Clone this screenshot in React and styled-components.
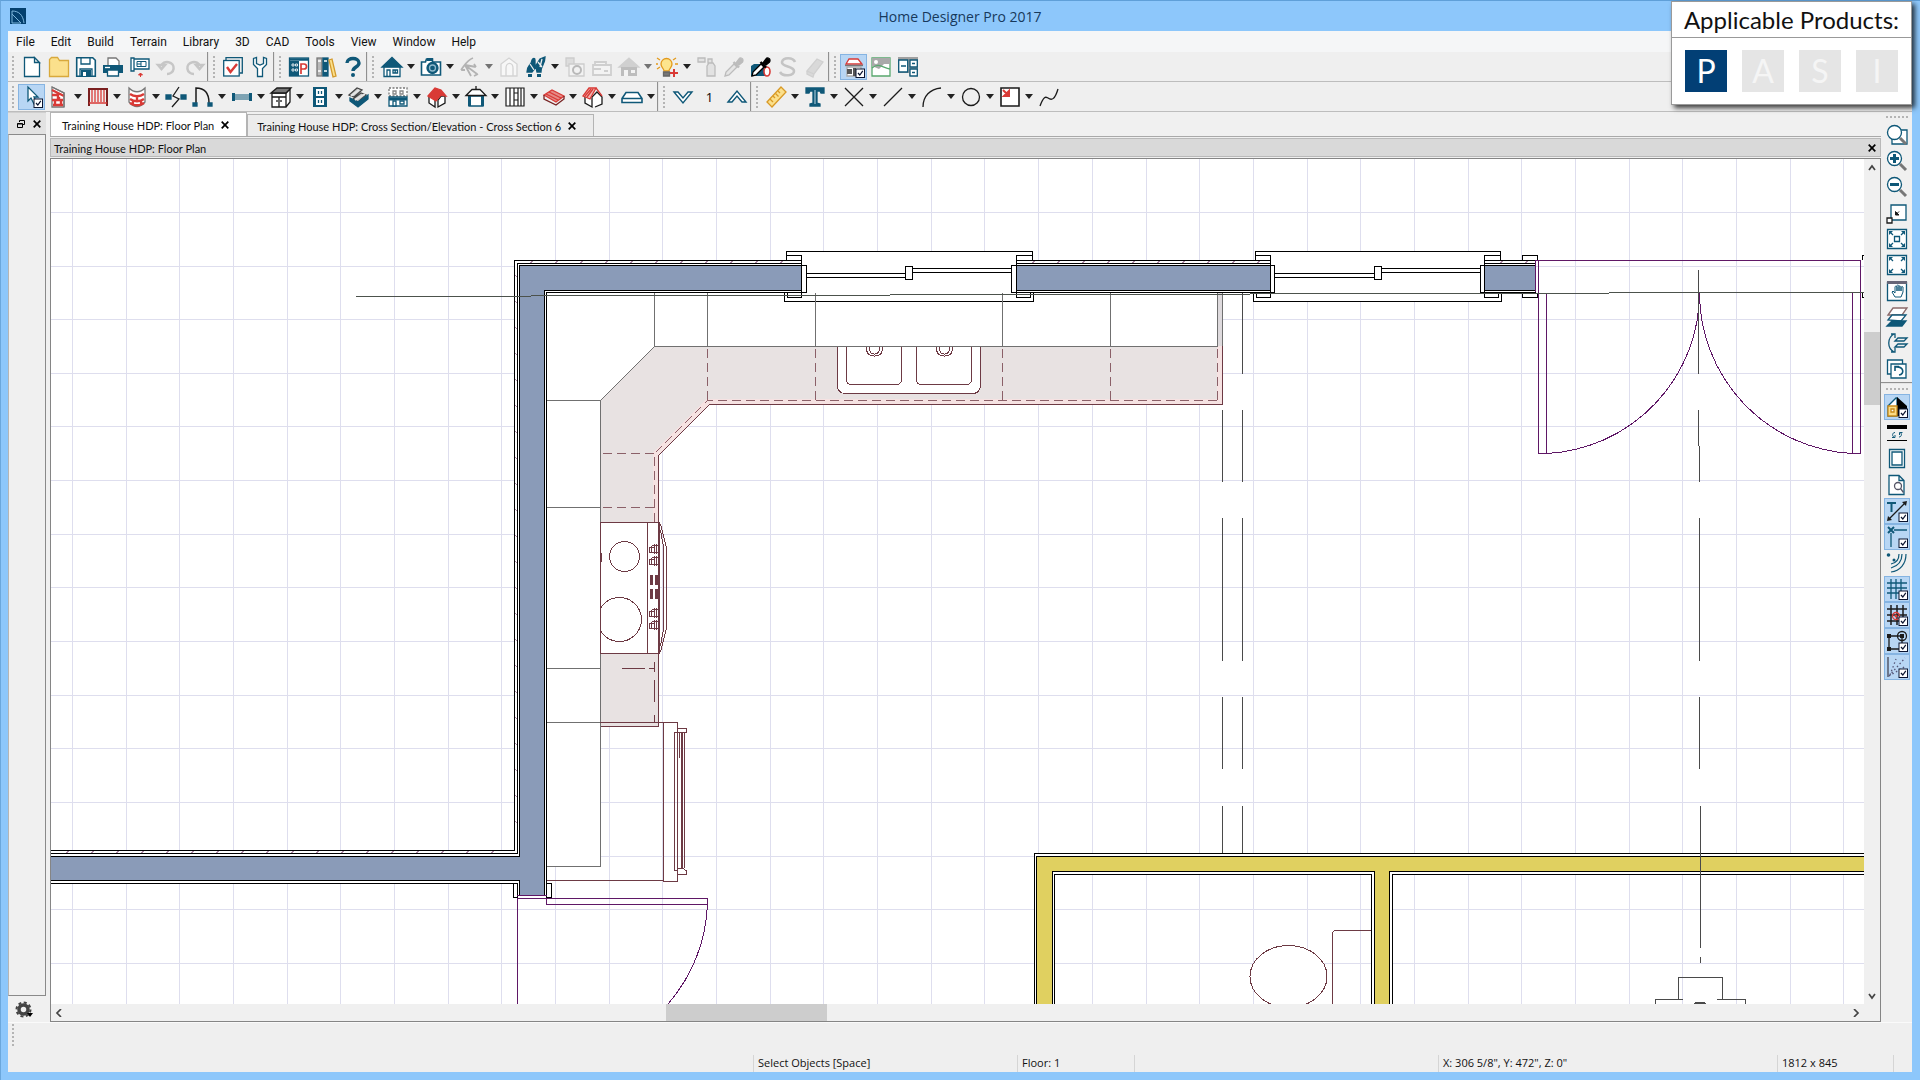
import React from "react";
import styled, { createGlobalStyle, css } from "styled-components";

const TEAL = "#0f5878";
const RED = "#d93a36";
const INK = "#1b1b1b";
const MAROON = "#6d3a44";
const PURPLE = "#5f1766";

const Global = createGlobalStyle`
  * { box-sizing: border-box; }
  body { margin: 0; background: #8dc7fb; }
  button {
    font: inherit;
    color: inherit;
    background: none;
    border: 0;
    padding: 0;
    margin: 0;
  }
`;

const AppWindow = styled.div`
  position: relative;
  display: flex;
  flex-direction: column;
  min-height: 100vh;
  padding: 0 8px 8px;
  background: #8dc7fb;
  border-top: 1px solid #5f9fd8;
  border-left: 1px solid #6ba7dc;
  padding-left: 7px;
  color: #111;
  font-family: "Noto Sans", "Open Sans", sans-serif;
  font-size: 12px;
`;

const TitleBar = styled.header`
  display: grid;
  grid-template-columns: 1fr auto 1fr;
  align-items: center;
  height: 30px;
  h1 {
    margin: 0;
    font-size: 14px;
    font-weight: 400;
    font-family: "Open Sans", sans-serif;
    color: #17395c;
  }
`;

const Logo = styled.svg`
  width: 16px;
  height: 16px;
  margin-left: 2px;
`;

const MenuBar = styled.nav`
  display: flex;
  align-items: center;
  height: 21px;
  background: #f5f6f7;
`;

const MenuItem = styled.button`
  padding: 0 8px;
  line-height: 20px;
  font-size: 12px;
  font-family: Roboto, sans-serif;
`;

const ToolRow = styled.div`
  display: flex;
  height: 30px;
  background: #efefef;
  border-bottom: 1px solid #bdbdbd;
`;

const Group = styled.div`
  display: flex;
  flex-direction: ${(p) => (p.$vertical ? "column" : "row")};
  align-items: center;
  ${(p) =>
    p.$vertical
      ? css`border-bottom: ${p.$last ? 0 : "2px groove #e4e4e4"};`
      : css`border-right: ${p.$last ? 0 : "2px groove #e4e4e4"};`}
`;

const Grip = styled.span`
  flex: none;
  background-image: radial-gradient(circle, #b4b4b4 1px, transparent 1px);
  ${(p) =>
    p.$vertical
      ? css`width: 24px; height: 4px; margin: 3px 0; background-size: 4px 4px;`
      : css`width: 4px; height: 24px; margin: 0 3px; background-size: 4px 4px;`}
`;

const ToolButton = styled.button`
  display: grid;
  place-items: center;
  width: 27px;
  height: 26px;
  border: 1px solid ${(p) => (p.$on ? "#86b4e2" : "transparent")};
  background: ${(p) => (p.$on ? "#b8d6f4" : "transparent")};
`;

const DropButton = styled.button`
  display: grid;
  place-items: center;
  width: 12px;
  height: 26px;
  opacity: ${(p) => (p.$dim ? 0.6 : 1)};
`;

const Glyph = styled.svg`
  width: 20px;
  height: 20px;
  overflow: visible;
  fill: none;
  stroke: ${TEAL};
  stroke-width: 1.3;
`;

const FloorNumber = styled.span`
  width: 27px;
  text-align: center;
  font-size: 13px;
`;

const Main = styled.div`
  flex: 1;
  display: flex;
  min-height: 0;
  background: #f0f0f0;
`;

const LeftDock = styled.aside`
  display: flex;
  flex-direction: column;
  width: 38px;
  border-top: 1px solid #cfcfcf;
`;

const DockHeader = styled.div`
  display: flex;
  justify-content: flex-end;
  align-items: center;
  gap: 4px;
  height: 21px;
  padding-right: 3px;
  background: #e2e2e2;
`;

const DockBody = styled.div`
  flex: 1;
  border: 1px solid #8a8a8a;
  border-left-color: #b5b5b5;
  background: #f0f0f0;
`;

const DockFooter = styled.div`
  height: 26px;
  padding: 5px 7px;
`;

const Center = styled.main`
  flex: 1;
  min-width: 0;
  display: flex;
  flex-direction: column;
  padding-left: 4px;
`;

const Tabs = styled.div`
  display: flex;
  align-items: flex-end;
  height: 25px;
  border-bottom: 1px solid #a9a9a9;
`;

const Tab = styled.div`
  display: flex;
  align-items: center;
  gap: 5px;
  height: ${(p) => (p.$active ? 24 : 22)}px;
  padding: 1px 15px 0 ${(p) => (p.$active ? 11 : 9)}px;
  background: ${(p) => (p.$active ? "#fff" : "#ececec")};
  border: 1px solid #b4b4b4;
  border-bottom: 0;
  font-family: Lato, sans-serif;
  font-size: 11px;
`;

const CloseButton = styled.button`
  display: grid;
  place-items: center;
  width: 12px;
  height: 14px;
`;

const DocTitle = styled.div`
  display: flex;
  justify-content: space-between;
  align-items: center;
  height: 19px;
  margin-top: 1px;
  padding: 1px 2px 0 3px;
  background: #d9d9d9;
  border: 1px solid #b9b9b9;
  font-family: Lato, sans-serif;
  font-size: 11px;
`;

const View = styled.div`
  flex: 1;
  display: grid;
  grid-template-columns: 1fr 16px;
  grid-template-rows: 1fr 17px;
  margin-top: 1px;
  border: 1px solid #858585;
  background: #f0f0f0;
`;

const Plan = styled.svg`
  width: 100%;
  height: 100%;
  min-height: 400px;
  background: #fff;
  shape-rendering: crispEdges;
`;

const ScrollTrack = styled.div`
  display: flex;
  flex-direction: ${(p) => (p.$vertical ? "column" : "row")};
  justify-content: space-between;
  align-items: stretch;
  background: #f0f0f0;
  button {
    display: grid;
    place-items: center;
    flex: none;
    width: 16px;
    height: 17px;
  }
`;

const Rail = styled.div`
  flex: 1;
  display: flex;
  flex-direction: inherit;
`;

const Space = styled.span`
  flex: ${(p) => p.$size};
`;

const Thumb = styled.span`
  flex: ${(p) => p.$size};
  background: #cdcdcd;
`;

const RightBar = styled.aside`
  width: 31px;
  background: #f0f0f0;
  ${ToolButton} { width: 26px; }
`;

const StatusBar = styled.footer`
  display: flex;
  flex-direction: column;
  justify-content: space-between;
  height: 50px;
  background: #efefef;
  border-top: 1px solid #fafafa;
`;

const StatusCells = styled.div`
  display: grid;
  grid-template-columns: 745fr 264fr 117fr 304fr 339fr 116fr 19fr;
  height: 17px;
  font-family: "Open Sans", sans-serif;
  font-size: 11px;
  line-height: 15px;
`;

const Cell = styled.span`
  padding-left: 4px;
  white-space: nowrap;
  border-left: 1px solid ${(p) => (p.$first ? "transparent" : "#d5d5d5")};
`;

const Products = styled.section`
  position: absolute;
  top: 0;
  right: 8px;
  width: 241px;
  height: 104px;
  background: #fff;
  border: 1px solid #9a9a9a;
  box-shadow: 3px 3px 5px rgba(0, 0, 0, 0.75);
  h2 {
    margin: 0;
    height: 36px;
    line-height: 36px;
    text-align: center;
    border-bottom: 1px solid #999;
    font-family: Lato, sans-serif;
    font-weight: 400;
    font-size: 24px;
    white-space: nowrap;
  }
`;

const Badges = styled.div`
  display: flex;
  justify-content: center;
  gap: 15px;
  padding-top: 12px;
`;

const Badge = styled.span`
  width: 42px;
  height: 42px;
  line-height: 42px;
  text-align: center;
  font-family: Lato, sans-serif;
  font-size: 32px;
  color: ${(p) => (p.$on ? "#fff" : "#f5f5f5")};
  background: ${(p) => (p.$on ? "#023f75" : "#e5e5e5")};
`;

const Check = () => (
  <g>
    <rect x="12" y="12" width="8.5" height="8.5" fill="#fff" stroke="#0a1430" strokeWidth="1" />
    <path d="M14 16l1.8 2 3-4.2" stroke="#0a1430" strokeWidth="1.2" />
  </g>
);

const Dropper = ({ c, f }) => (
  <g stroke={c}>
    <path d="M1 19l1-4 8-8 3 3-8 8z" fill={f} />
    <path d="M9.500 5l5.500 5.500" strokeWidth="2.400" />
    <path d="M12 6l3-4c1-2 4-1 4 1s0 2-4 5z" fill={c} />
  </g>
);

const Lens = ({ children }) => (
  <g>
    <path d="M13 13l6 6" stroke="#777" strokeWidth="3" />
    <circle cx="7.5" cy="7.5" r="7" fill="#fff" />
    {children}
  </g>
);

const icons = {
  new: <path d="M2.500 .5h10l5 5v14h-15zM12.500 .5v5h5z" fill="#fff" />,
  open: <path d="M.5 19.500v-17l2-2h6l2 3h9v16z" fill="#fbe08c" stroke="#d8a93c" />,
  save: (
    <g>
      <path d="M.7 .7h16l2.600 2.600v16h-18.600z" fill="#fff" strokeWidth="1.600" />
      <path d="M5 1v6h9v-6M4 19v-7h12v7" /><rect x="5" y="13" width="10" height="7" fill={TEAL} stroke="none" />
      <rect x="7" y="15" width="3" height="4" fill="#fff" stroke="none" />
    </g>
  ),
  print: (
    <g>
      <path d="M5 8V1h8l3 3v4" fill="#fff" stroke="#777" />
      <path d="M0 8h20v8h-20z" fill={TEAL} stroke="none" />
      <path d="M4.500 13h11v6h-11z" fill="#fff" /><path d="M2 10.500h5" stroke="#fff" />
    </g>
  ),
  sheet: (
    <g>
      <path d="M1 1h3v13h-3zM4 2h15v10h-15" fill="#fff" /><path d="M7 4.500h9v5h-9zM11 4.500v5M7 7h4" strokeWidth="1" />
      <path d="M10.500 20v-4M8.500 18l2-2 2 2z" fill={RED} stroke={RED} strokeWidth="1" />
    </g>
  ),
  undo: <path d="M4 9a6.500 6 0 1 1 6 8M1 8l3.500 4 3.500-4z" stroke="#c6c6c6" strokeWidth="2.500" fill="none" />,
  redo: <path d="M16 9a6.500 6 0 1 0-6 8M19 8l-3.500 4-3.500-4z" stroke="#c6c6c6" strokeWidth="2.500" fill="none" />,
  prefs: (
    <g>
      <path d="M3 3V.7h16.300v15.300h-2.500" /><rect x=".7" y="3.500" width="15.500" height="15.500" fill="#fff" />
      <path d="M4 10l3.500 5 6.500-8" stroke={RED} strokeWidth="2.400" />
    </g>
  ),
  wrench: <path d="M3.500 1.500v6l4 4v8h5v-8l4-4v-6l-3-1v6l-3.500 1.500-3.500-1.500v-6z" fill="#fff" />,
  catalog: (
    <g>
      <rect x=".5" y="1" width="19" height="18" fill="#fff" />
      <path d="M1 2.500h18" strokeWidth="2.500" />
      <rect x="1" y="4" width="9" height="15" fill={TEAL} stroke="none" />
      <path d="M3 7h2v2h-2zM6.500 7h2v2h-2zM3 12h2v2h-2zM6.500 12h2v2h-2z" stroke="#fff" strokeWidth=".8" />
      <path d="M12 17v-10h3a2.500 2.500 0 0 1 0 5h-3" stroke={RED} strokeWidth="1.700" />
    </g>
  ),
  books: (
    <g>
      <rect x="1" y="1" width="5" height="18" fill="#b8b8b8" stroke="#777" />
      <rect x="7" y="1" width="5" height="18" fill={TEAL} />
      <path d="M2 4h3M8 4h3M8 14h3M2 14h3" stroke="#fff" />
      <path d="M13 3l3-1 4 17-3 1z" fill="#fbe08c" stroke="#d39a2c" />
    </g>
  ),
  help: (
    <g>
      <path d="M4 6c0-6 12-6 12 0 0 4-6 4-6 8" strokeWidth="3.400" />
      <circle cx="10" cy="18" r="2" fill={TEAL} stroke="none" />
    </g>
  ),
  house: (
    <g>
      <path d="M2 9.500h16v10h-16z" fill="#fff" />
      <path d="M0 10l10-9.500 10 9.500z" fill={TEAL} />
      <path d="M5 19v-6h3v6M11 13h4.500v3h-4.500zM13.200 13v3" />
    </g>
  ),
  camera: (
    <g>
      <path d="M.5 5h4l1-3h6v3h8v13h-19z" fill="#fff" strokeWidth="1.600" />
      <rect x="6" y="1" width="6" height="3" fill={TEAL} stroke="none" />
      <circle cx="11.500" cy="11" r="5.500" fill={TEAL} /><circle cx="11.500" cy="11" r="3" stroke="#8fb9cc" />
    </g>
  ),
  orbit: <path d="M13 1c-6 2-8 7-12 12M5 8l12 9M5 8l11 2M5 8l6 11M1 13l4 0M14 19l4-2M16 10l-2-3" stroke="#b3b3b3" strokeWidth="1.800" />,
  ghostDoor: <path d="M2 19v-12l8-6 8 6v12zM7 19v-8a3 4 0 0 1 7 0v8z" stroke="#d3d3d3" fill="#f7f7f7" />,
  walk: (
    <g>
      <path d="M1 15c0-7 4-6 5-12 1-2 3-2 3 0v7l5-8 5-2c0 8-4 8-4 15h-4l-1-5-4 5z" fill={TEAL} />
      <path d="M4 7l4 6M16 2l-2 8M12 5l4 5" stroke="#efefef" />
      <path d="M2 17h4v3h-4zM11 17h4v3h-4z" fill={TEAL} stroke="none" />
    </g>
  ),
  ghostCam: (
    <g stroke="#cdcdcd">
      <path d="M1 1h8v8h-8z" fill="#ddd" /><path d="M4 7h15v12h-15z" fill="#f2f2f2" />
      <circle cx="12" cy="13" r="4" stroke="#b9b9b9" strokeWidth="2" />
    </g>
  ),
  ghostCase: <path d="M1 8h18v10h-18zM3 8V5h11v3M1 12h8M12 14h4" stroke="#cfcfcf" fill="#f3f3f3" strokeWidth="1.800" />,
  ghostHouse: (
    <g>
      <path d="M0 10l10-9 10 9z" fill="#d0d0d0" stroke="#d0d0d0" />
      <path d="M2 10h16v9h-16z" fill="#bdbdbd" stroke="none" /><path d="M5 19v-6h4v6zM12 13h4v3h-4z" fill="#f3f3f3" stroke="none" />
    </g>
  ),
  bulb: (
    <g stroke="#e39a1c">
      <path d="M6 14c0-3-3-3-3-7a5.500 5.500 0 0 1 11 0c0 4-3 4-3 7z" fill="#fde58d" />
      <path d="M-1 1l3 2M18 1l-3 2M-1 12l3-2M17 7h3M-2 7h2" />
      <path d="M5.500 15h6v4h-6z" fill="#777" stroke="#666" />
      <path d="M12 16h8M16 12v8" stroke={RED} strokeWidth="2" />
    </g>
  ),
  spray: <path d="M1 1h7v4h-7zM10 9l2-3h4l2 3v10h-8zM11 2h4v4h-4z" stroke="#bcbcbc" fill="#e2e2e2" />,
  dropGhost: <Dropper c="#bcbcbc" f="#e5e5e5" />,
  dropper: (
    <g>
      <path d="M0 9l3-2h10l2 2v10h-15z" fill={TEAL} stroke="none" />
      <ellipse cx="16" cy="14.500" rx="3" ry="4.500" stroke={RED} strokeWidth="1.600" fill="#fff" />
      <Dropper c="#000" f="#fff" />
    </g>
  ),
  sGhost: <path d="M17 5c-2-5-12-5-13 0s12 4 12 9-11 6-14 1" stroke="#c4c4c4" strokeWidth="2.600" />,
  eraser: <path d="M2 14l10-12 6 3-9 12zM2 14v3l6 3 1-3" stroke="#d0d0d0" fill="#d9d9d9" />,
  camView: (
    <g>
      <path d="M2 7l3-5h9l4 5z" stroke={RED} fill="#fff" />
      <path d="M1 8.500h18" stroke="#777" /><path d="M3 10h14v9h-14z" fill="#fff" stroke="#aaa" />
      <path d="M3 12h5v5h-5zM9 11h3v8h-3z" fill="#555" stroke="none" /><Check />
    </g>
  ),
  backdrop: (
    <g>
      <path d="M1 1h18v18h-18z" fill="#fff" stroke="#58a86e" /><path d="M1 1h18v6l-6 0-5 5-7-3z" fill="#a9a9a9" stroke="none" />
      <path d="M1 11c7-6 11 0 18 1" stroke="#58a86e" /><circle cx="5" cy="5" r="2" fill="#fff" stroke="none" />
    </g>
  ),
  layout: (
    <g>
      <path d="M0 0h20v19h-9v-3h-11z" fill="#a0a0a0" stroke="none" />
      <path d="M.7 3h9v12h-9zM12 3h7.300v7h-7.300zM12 12h7.300v7h-7.300z" fill="#fff" />
      <path d="M3 9h5M14 6.500h3M14 15.500h3" />
    </g>
  ),
  select: (
    <g>
      <path d="M6 0v14l3-3 3 6 3-1-3-6h4z" fill="#fff" /><Check />
    </g>
  ),
  wall: (
    <g stroke={RED}>
      <path d="M3 0l12 6v14h-12z" fill="#fff" stroke="#777" />
      <path d="M3 3l12 6M3 8h6v5M3 13h11M6 13v5M10 10v3M4 18h10M12 14v4" strokeWidth="2.400" />
      <path d="M3 0l12 6v14" stroke="#777" />
    </g>
  ),
  railing: (
    <g stroke="#a33">
      <path d="M0 2h20M1 1v18M19 1v18" stroke="#7a1f1f" strokeWidth="2" />
      <path d="M4 3v12M7 3v12M10 3v12M13 3v12M16 3v12M1 16h18" stroke={RED} />
    </g>
  ),
  curved: (
    <g>
      <path d="M2 1c5 5 11 5 16 0v14c-5 6-11 6-16 0z" fill="#fff" stroke="#777" />
      <path d="M3 7c4 3 10 3 14 0M3 12c4 3 10 3 14 0M3 16c4 3 10 3 14 0M10 9v4M6 13v4M14 13v4" stroke={RED} strokeWidth="2.300" />
    </g>
  ),
  breakWall: (
    <g>
      <path d="M0 8h5v4h-5zM15 8h5v4h-5z" fill={TEAL} /><path d="M13 0l-6 9 6 3-7 8" stroke={INK} />
    </g>
  ),
  door: (
    <g>
      <path d="M3 16V1c9 0 13 6 13 15" stroke={INK} strokeWidth="1.500" />
      <path d="M0 16h4v3h-4zM15 16h4v3h-4z" fill={TEAL} />
    </g>
  ),
  window: (
    <g>
      <path d="M0 6h3v8h-3zM17 6h3v8h-3z" fill={TEAL} stroke="none" /><path d="M3 8h14M3 10h14M3 12h14" strokeWidth="1" />
    </g>
  ),
  cabinet: (
    <g stroke={INK}>
      <path d="M1 6h14v14h-14zM15 6l4-4v13l-4 5" fill="#fff" /><path d="M0 6l6-5h14l-5 5z" fill="#777" />
      <path d="M1 10h14M8 10v10M6 13v2M10 13v2" />
    </g>
  ),
  outlet: (
    <g>
      <rect x="3" y="0" width="14" height="20" fill={TEAL} stroke="none" />
      <path d="M6 2h8v7h-8zM6 11h8v7h-8z" fill="#fff" stroke="none" /><path d="M8.500 4v3M11.500 4v3M8.500 13v3M11.500 13v3" />
    </g>
  ),
  stairs: (
    <g stroke="#444">
      <path d="M0 8l8-7 5 2-8 7zM4 12l8-6 5 2-8 7z" fill="#c9c9c9" />
      <path d="M9 15l10-7v4l-10 8-8-6v-3z" fill={TEAL} stroke={TEAL} />
      <path d="M2 9l8-6M6 13l10-6" stroke="#e5e5e5" strokeWidth="2" />
    </g>
  ),
  floors: (
    <g>
      <path d="M1 1h18v8h-18z" stroke="#777" strokeDasharray="2 1.500" fill="#fff" /><path d="M5 4h3v3h-3zM12 4h3v3h-3z" stroke="#888" />
      <path d="M1 10h18v9h-18z" fill="#fff" /><path d="M1 12h18" strokeWidth="3" /><path d="M5 14h3v5h-3zM12 14h4v3h-4z" fill="#fff" />
    </g>
  ),
  roof: (
    <g>
      <path d="M2 9v7l6 4v-9M18 9v7l-7 4v-7l3-4 4 0" fill="#fff" stroke={INK} />
      <path d="M1 9l7-8 6 2 5 6-5-1-5 6z" fill={RED} stroke={RED} />
    </g>
  ),
  gable: (
    <g>
      <path d="M3 9h14v10h-14z" fill="#fff" /><path d="M3.500 9v10M16.500 9v10" strokeWidth="3" />
      <path d="M0 8.500l6-6h8l6 6z" fill="#fff" stroke={INK} /><path d="M10-1v3" stroke={INK} />
    </g>
  ),
  framing: <path d="M1 1h18v18h-18zM5 1v18M9 1v18M13 1v18M9 6h4M9 13h4M16 1v18" stroke={INK} fill="#fff" strokeWidth="1.200" />,
  deck: (
    <g stroke={RED}>
      <path d="M0 8l8-5 12 6-8 6z" fill="#e58a86" /><path d="M2 7l12 6M5 5l12 6" />
      <path d="M0 8v4l12 6 8-6v-3" stroke="#722" />
    </g>
  ),
  dormer: (
    <g>
      <path d="M2 8v8l7 4v-10M9 20v-10l5-5 5 5v7l-7 3" fill="#fff" stroke={INK} />
      <path d="M0 9l6-8h7l-6 11zM13 1l6 8" fill="#f2b5b1" stroke={RED} /><path d="M2 9l6-7M4 10l6-8" stroke={RED} />
    </g>
  ),
  terrain: <path d="M0 15.500v-4l4-6h12l4 6v4zM0 11.500h20" fill="#fff" strokeWidth="1.600" />,
  down: <path d="M1 5l9 11 9-11h-4l-5 6-5-6z" fill="#fff" strokeWidth="1.400" />,
  up: <path d="M1 15l9-11 9 11h-4l-5-6-5 6z" fill="#fff" strokeWidth="1.400" />,
  ruler: (
    <g stroke="#d99a26">
      <path d="M1 15l14-15 5 5-14 15z" fill="#fbe08c" /><path d="M4 12l3 3M7 9l2 2M9.500 6.500l3 3M12 4l2 2" />
    </g>
  ),
  text: (
    <g>
      <path d="M1 1h18v5h-3l-1-2h-3v12l3 1v2h-10v-2l3-1v-12h-3l-1 2h-3z" fill={TEAL} />
      <path d="M10 3v14" stroke="#9fc1d0" strokeWidth="1.200" />
    </g>
  ),
  cross: <path d="M1 1l18 18M19 1L1 19" stroke={INK} />,
  line: <path d="M1 19L19 1" stroke={INK} />,
  arc: <path d="M1 20C1 9 8 2 19 1" stroke={INK} />,
  circle: <circle cx="10" cy="10" r="8.500" stroke={INK} />,
  box: (
    <g>
      <path d="M1 1h18v18h-18z" fill="#fff" stroke={INK} strokeWidth="1.600" />
      <path d="M3 3l5 5M9 4v5h-5z" stroke={RED} fill={RED} strokeWidth="2" />
    </g>
  ),
  spline: <path d="M1 19c4-11 6-9 8-8 4 3 7 1 10-9" stroke={INK} />,
  zoomBox: (
    <g>
      <path d="M5 5h15v14h-15z" fill="#fff" />
      <Lens />
    </g>
  ),
  zoomIn: <Lens><path d="M3 7.500h9M7.500 3v9" strokeWidth="3" /></Lens>,
  zoomOut: <Lens><path d="M3 7.500h9" strokeWidth="3" /></Lens>,
  undoZoom: (
    <g>
      <path d="M4 2h15v15h-15z" fill="#fff" /><path d="M0 15h5v5h-5z" fill="#fff" stroke={INK} />
      <path d="M12 8.500l-2 2M8.500 8.500v3.500h3.500z" stroke={INK} fill={INK} strokeWidth="1" />
    </g>
  ),
  fill: (
    <g>
      <path d="M.5 .5h19v19h-19z" fill="#fff" />
      <path d="M7.500 7.500h5v5h-5z" /><path d="M3 3l3 3M17 3l-3 3M3 17l3-3M17 17l-3-3" />
      <path d="M2 2h4l-4 4zM18 2h-4l4 4zM2 18h4l-4-4zM18 18h-4l4-4z" fill={TEAL} stroke="none" />
    </g>
  ),
  fillAll: (
    <g>
      <path d="M.5 .5h19v19h-19z" fill="#fff" /><path d="M3 3l3 3M17 3l-3 3M3 17l3-3M17 17l-3-3" />
      <path d="M2 2h4l-4 4zM18 2h-4l4 4zM2 18h4l-4-4zM18 18h-4l4-4z" fill={TEAL} stroke="none" />
    </g>
  ),
  pan: (
    <g>
      <path d="M.5 1.500h19v18h-19z" fill="#fff" /><path d="M0 1.500h20" stroke="#667" strokeWidth="3" />
      <path d="M5 11l3 5h6l2-5v-5c-1-1-2 0-2 1v3-4c-1-2-2-1-2 0v4-5c-1-2-2-1-2 0v5-4c-1-1-2-1-2 0v6l-2-2z" fill="#fff" strokeWidth="1" />
    </g>
  ),
  layers: (
    <g>
      <path d="M1 8l5-7h14l-5 7z" fill="#fff" stroke="#8a6a6a" /><path d="M1 13l4-5h14l-5 6z" fill="#fff" />
      <path d="M0 19l5-5h14l-4 5z" fill={TEAL} />
    </g>
  ),
  swapLayers: <path d="M7 1C0 5 0 15 7 19M4 1h4v4M4 19h4v-4M8 8l3-3h9l-3 3zM8 14l3-3h9l-3 3z" />,
  refresh: (
    <g>
      <path d="M.5 1h15v14h-15z" fill="#fff" /><path d="M4 5h15v14h-15z" fill="#fff" />
      <path d="M8 8c9-1 10 7 4 8M8 12v-4.500h4" strokeWidth="1.600" />
    </g>
  ),
  render: (
    <g>
      <path d="M1 9l8-8 1 0v18h-9z" fill="#fff" /><path d="M10 0l10 9v10h-10z" fill="#000" stroke="none" />
      <path d="M1 9h9v10h-9z" fill="#fbdc86" stroke="#c98a1a" /><path d="M4 12h3v3h-3z" fill="#fff" stroke="#c98a1a" /><Check />
    </g>
  ),
  lineWeight: (
    <g>
      <path d="M0 4h20" stroke="#000" strokeWidth="4" /><path d="M0 17.500h20" stroke="#000" strokeWidth="1" />
      <path d="M8 9.500c-3 0-3 4-1 4.500M5 14.500h3v-2.500M12 14c3 0 3-4 1-4.500M15.500 9.500h-3v2.500" strokeWidth="1" />
    </g>
  ),
  page: <path d="M2.500 .5h15v18h-15zM5 3h10v13h-10z" fill="#fff" />,
  preview: (
    <g>
      <path d="M2 .5h10l5 5v14h-15zM12 .5v5h5" fill="#fff" />
      <circle cx="11" cy="11" r="3.500" stroke="#556" /><path d="M13.500 13.500l3 4" stroke="#556" />
    </g>
  ),
  textArrow: (
    <g>
      <path d="M0 2h9M4.500 2v9" strokeWidth="2" /><path d="M2 18L18 2" stroke={INK} />
      <path d="M20 0l-5 1 4 4zM0 20l1-5 4 4z" fill={INK} stroke="none" /><Check />
    </g>
  ),
  snap: (
    <g>
      <path d="M7 3h13M4 6v14" /><path d="M1 0l6 6M7 0l-6 6" strokeWidth="2" /><Check />
    </g>
  ),
  arcs: (
    <g>
      <path d="M12 1c0 5-3 9-8 10M19 1c0 10-6 17-15 18M15 1c0 7-4 12-11 14" strokeWidth="1.200" />
      <circle cx="1.500" cy="2" r="1.800" fill={TEAL} stroke="none" /><circle cx="7" cy="7" r="1.500" fill={TEAL} stroke="none" />
    </g>
  ),
  grid: (
    <g>
      <path d="M0 4h20M0 9h20M0 14h20M4 0v20M9 0v20M14 0v20" /><Check />
    </g>
  ),
  gridSnap: (
    <g>
      <path d="M0 4h20M0 10h20M0 16h20M4 0v20M10 0v20M16 0v20" stroke={INK} strokeWidth="1.500" />
      <circle cx="9" cy="11" r="3.500" stroke={RED} /><circle cx="9" cy="11" r="1.500" fill={RED} stroke="none" /><Check />
    </g>
  ),
  objSnap: (
    <g stroke={INK}>
      <path d="M2 5h13v13h-13z" /><circle cx="15" cy="5" r="4.500" />
      <path d="M0 3h4v4h-4zM13 3h4v4h-4zM0 16h4v4h-4z" fill={INK} stroke="none" /><Check />
    </g>
  ),
  angleSnap: (
    <g>
      <path d="M1 0v20" stroke="#445" /><path d="M2 19L18 1M2 19L19 9M3 18L9 2" stroke="#557" strokeDasharray="1.500 2.500" /><Check />
    </g>
  ),
};

const Tool = ({ name, label, on, drop, dim }) => (
  <>
    <ToolButton type="button" aria-label={label || name} aria-pressed={on ? true : undefined} $on={on}>
      <Glyph viewBox="0 0 20 20" aria-hidden="true">{icons[name]}</Glyph>
    </ToolButton>
    {drop && (
      <DropButton type="button" aria-label={`${label || name} options`} $dim={dim}>
        <svg width="8" height="5"><path d="M0 0h8l-4 5z" fill="#222" /></svg>
      </DropButton>
    )}
  </>
);

const Cross = ({ size = 8 }) => (
  <svg width={size} height={size} viewBox="0 0 8 8" aria-hidden="true">
    <path d="M.7 .7l6.600 6.600M7.300 .7L.7 7.300" stroke="#000" strokeWidth="1.700" />
  </svg>
);

const Chevron = ({ d }) => (
  <svg width="8" height="8" viewBox="0 0 8 8" aria-hidden="true"><path d={d} fill="none" stroke="#444" strokeWidth="1.700" /></svg>
);

const menus = ["File", "Edit", "Build", "Terrain", "Library", "3D", "CAD", "Tools", "View", "Window", "Help"];

const topGroups = [
  ["new", "open", "save", "print", "sheet", "undo", "redo"],
  ["prefs", "wrench"],
  ["catalog", "books", "help"],
  ["house+", "camera+", "orbit-", "ghostDoor", "walk+", "ghostCam", "ghostCase", "ghostHouse-", "bulb+", "spray", "dropGhost", "dropper", "sGhost", "eraser"],
  ["camView*", "backdrop", "layout"],
];
const buildGroups = [
  ["select*", "wall+", "railing+", "curved+", "breakWall", "door+", "window+", "cabinet+", "outlet+", "stairs+", "floors+", "roof+", "gable+", "framing+", "deck+", "dormer+", "terrain+"],
  ["down", "#", "up"],
  ["ruler+", "text+", "cross+", "line+", "arc+", "circle+", "box+", "spline"],
];
const sideGroups = [
  ["zoomBox", "zoomIn", "zoomOut", "undoZoom", "fill", "fillAll", "pan", "layers", "swapLayers", "refresh"],
  ["render*", "lineWeight", "page", "preview", "textArrow*", "snap*", "arcs", "grid*", "gridSnap*", "objSnap*", "angleSnap*"],
];

const Groups = ({ groups, vertical }) =>
  groups.map((group, i) => (
    <Group key={i} $vertical={vertical} $last={i === groups.length - 1}>
      <Grip $vertical={vertical} />
      {group.map((entry) => {
        if (entry === "#") return <FloorNumber key={entry}>1</FloorNumber>;
        const name = entry.replace(/[+*-]$/, "");
        return (
          <Tool
            key={name}
            name={name}
            on={entry.endsWith("*")}
            drop={/[+-]$/.test(entry)}
            dim={entry.endsWith("-")}
          />
        );
      })}
    </Group>
  ));

const range = (n) => Array.from({ length: n }, (_, i) => i);

const GridLines = () => (
  <g stroke="#dedeee">
    {range(60).map((i) => {
      const x = Math.floor(72.4 + i * 53.68) + 0.5;
      return <path key={`v${i}`} d={`M${x} 0V2400`} />;
    })}
    {range(40).map((i) => {
      const y = Math.floor(212.4 + i * 53.64) + 0.5;
      return <path key={`h${i}`} d={`M0 ${y}H4000`} />;
    })}
  </g>
);

const WindowUnit = ({ x, end, jamb, mid }) => (
  <g stroke="#000" fill="none">
    <path d={`M${x - 15} 252H${end + 16}V260H${x - 15}zM${x + 1} 256H${end}V301H${x + 1}zM${x - 16} 294H${end + 17}V301H${x - 16}z`} fill="#fff" stroke="none" />
    <path d={`M${x - 15}.5 260V251.500H${end + 16}.5V260M${x - 15} 255.500H${x}.5V297.500H${x - 14}.5V293`} />
    <path d={`M${end + 16} 255.500H${end}.5V297.500H${end + 14}.5V293`} />
    <path d={`M${x - 17}.5 293V301.500H${end + 17}.5V293`} />
    <path d={`M${x}.5 265.500H${x + jamb}.5V292.500H${x}.5zM${end - jamb}.5 265.500H${end}.5V292.500H${end - jamb}.5z`} />
    <path d={`M${x + jamb} 273.500H${mid}M${x + jamb} 277.500H${mid}M${mid + 7} 268.500H${end - jamb}M${mid + 7} 272.500H${end - jamb}`} />
    <path d={`M${mid}.5 266.500h7v13h-7z`} fill="#fff" />
  </g>
);

const TopWall = ({ from, to }) => (
  <g>
    <path d={`M${from} 260H${to}V293H${from}z`} fill="#fff" />
    <path d={`M${from} 266H${to}V290H${from}z`} fill="#8a9bb8" />
    <path d={`M${from} 260.500H${to}M${from} 263.500H${to}M${from} 265.500H${to}M${from} 290.500H${to}M${from} 292.500H${to}`} stroke="#000" />
    {range(Math.floor((to - from) / 25)).map((i) => (
      <path key={i} d={`M${from + 16 + i * 25} 263l3-2`} stroke="#b08aa8" />
    ))}
  </g>
);

const Knobs = ({ y }) => (
  <g>
    {[0, 12].map((d) => (
      <g key={d}>
        <circle cx="652" cy={y + d + 6} r="3" /><circle cx="655" cy={y + d + 5} r="4" />
        <path d={`M654.500 ${y + d}v10M656.500 ${y + d}v10`} />
      </g>
    ))}
  </g>
);

const FloorPlan = () => (
  <Plan role="img" aria-label="Kitchen floor plan">
    <g transform="translate(-51 -159)" fill="none" strokeWidth="1">
      <GridLines />

      <path d="M547 293H1223V347H655L601 401V867H547z" fill="#fff" />
      <path d="M51 851H515V261H801V293H547V895H519V884H51z" fill="#fff" />
      <path d="M51 857H520V266H801V290H544V895H520V880H51z" fill="#8a9bb8" />
      <g stroke="#000">
        <path d="M51 850.500H514.500V260.500H801M51 853.500H517.500V263.500H801M51 856.500H519.500V265.500H801" />
        <path d="M801 290.500H544.500V895M801 292.500H546.500V898M51 880.500H519.500V895M51 883.500H517.500" />
        <path d="M513.500 883.500h4v14h-4zM546.500 883.500h5v14h-5z" fill="#fff" />
      </g>
      <g stroke="#b08aa8">
        {range(11).map((i) => <path key={`t${i}`} d={`M${530 + i * 25} 263l3-2`} />)}
        {range(22).map((i) => <path key={`s${i}`} d={`M515 ${275 + i * 26}l2 2`} />)}
        {range(18).map((i) => <path key={`b${i}`} d={`M${66 + i * 25} 853l3-2`} />)}
      </g>

      <TopWall from={1016} to={1271} />
      <TopWall from={1484} to={1536} />
      <WindowUnit x={801} end={1016} jamb={5} mid={905} />
      <WindowUnit x={1270} end={1484} jamb={4} mid={1374} />
      <path d="M1522.500 260V255.500H1537.500V260M1522.500 293V297.500H1537.500V293M1864 255.500H1862.500V260M1864 297.500H1862.500V293" stroke="#000" />

      <path d="M655 346H1222V404H710L659 455V522H601V400z" fill="#f6e2e2" />
      <path d="M655 346H1217V399H706L653 452V522H601V400zM601 654H658V727H601z" fill="#e8e2e2" />
      <path d="M1218 293H1222V346H1218z" fill="#dedadd" />
      <g stroke="#707070">
        <path d="M654.500 293V346.500H1217.500V293M707.500 293V346M815.500 293V346M1002.500 293V346M1110.500 293V346M1222.500 293V346" />
        <path d="M654.500 346.500L600.500 400.500V866.500H547M547 400.500H600M547 507.500H600M547 668.500H600M547 722.500H600" />
      </g>
      <path
        d="M1217 400.500H707.500L654.500 453.500V522M707.500 400V346M815.500 400V346M1002.500 400V346M1110.500 400V346M1217.500 400V346M654 453.500H601M654 507.500H601"
        stroke="#8b6068"
        strokeDasharray="9 5"
      />
      <g stroke={MAROON}>
        <path d="M1222.500 346V404.500H709.500L658.500 455.500V522M658.500 653V726.500H600.500" />
        <path d="M622 668.500H645M649 668.500H654M654.500 662V672M654.500 680V702M654.500 715V722M600 722.500H677.500" />
        <path d="M837.500 347V385Q837.500 393.500 846 393.500H972Q980.500 393.500 980.500 385V347" fill="#fff" />
        <path d="M846.500 347V379Q846.500 384.500 852 384.500H896Q901.500 384.500 901.500 379V347M916.500 347V379Q916.500 384.500 922 384.500H966Q971.500 384.500 971.500 379V347" />
        {[874, 944].map((x) => (
          <path key={x} d={`M${x - 8}.5 347v3q1 6 8 6t8-6v-3M${x - 5}.5 347v3q1 4 5 4t5-4v-3`} />
        ))}

        <path d="M600.500 522.500H659.500V653.500H600.500z" fill="#fff" />
        <path d="M647.500 522V653M658.500 522V653M601.500 553V562" />
        <circle cx="624.500" cy="556.500" r="15" />
        <path d="M601 607.500A22 22 0 1 1 601 631.500" />
        <path d="M660.500 524L666.500 548V628L660.500 652M660.500 530L663.500 547V629L660.500 646" />
        <Knobs y={544} />
        <Knobs y={608} />
        <path d="M651.500 575v10M656.500 575v10M651.500 589v10M656.500 589v10" strokeWidth="3" />

        <path d="M663.500 722V881.500H677.500V722M547 880.500H663" />
        <path d="M674.500 870.500V732.500H677M674 870.500H677M677.500 728.500H686.500V732.500H677.500zM679.500 732V758M684.500 732V868M677 868.500H683L686.500 871V874.500H677" />
        <path d="M681.500 732V868" strokeWidth="2" />
      </g>

      <g stroke={PURPLE}>
        <path d="M1535.500 292V260.500H1860.500V453.500H1852.500V293M1538.500 260V453.500H1546.500V293" />
        <path d="M1546.500 453.500A161 161 0 0 0 1699.500 292.500A161 161 0 0 0 1852.500 453.500" />
        <path d="M517 895.500H547M707.500 904V898.500H517.500V1010M546.500 898V904.500H707.500M707.500 904A161 161 0 0 1 668 1004" />
      </g>

      <path d="M356 296.500L1864 292.300" stroke="#4c524c" />
      <g stroke="#4a4a4a">
        <path d="M1242.500 293V374M1242.500 410V482M1242.500 518V661M1242.500 697V769M1242.500 806V853M1222.500 410V482M1222.500 518V661M1222.500 697V769M1222.500 806V853" />
      </g>

      <path d="M1034 853H4000V875H1393V1400H1371V875H1055V1400H1034z" fill="#fff" />
      <path d="M1037 857H4000V871H1389V1400H1375V871H1052V1400H1037z" fill="#e0d060" />
      <path d="M1034.500 1400V853.500H4000M1036.500 1400V856.500H4000M1052.500 1400V871.500H1374.500V1400M1054.500 1400V874.500H1371.500V1400M1389.500 1400V871.500H4000M1392.500 1400V874.500H4000" stroke="#000" />
      <g stroke={MAROON}>
        <ellipse cx="1288.500" cy="976.500" rx="38.500" ry="31" fill="#fff" />
        <path d="M1371 930.500H1336Q1332.500 930.500 1332.500 934V1100" />
      </g>
      <g stroke="#4a4a4a">
        <path d="M1698.500 270V374M1698.500 410V446M1699.500 446V482M1699.500 518V661M1699.500 697V769M1700.500 806V948M1700.500 957V963" />
        <path d="M1678.500 999V977.500H1722.500V999M1655.500 1010V999.500H1683M1717 999.500H1745.500V1010" />
        <ellipse cx="1700" cy="1004" rx="6" ry="2" fill="#4a4a4a" />
      </g>
    </g>
  </Plan>
);

export default function App() {
  return (
    <AppWindow>
      <Global />
      <TitleBar>
        <Logo viewBox="0 0 16 16" aria-hidden="true">
          <path d="M0 0h16v16H0z" fill="#04406f" />
          <path d="M2 3c7 0 11 4 12 12M2 3v12h9l-9-9" stroke="#7db5dc" fill="none" />
        </Logo>
        <h1>Home Designer Pro 2017</h1>
      </TitleBar>
      <MenuBar aria-label="Main menu">
        {menus.map((m) => <MenuItem key={m} type="button">{m}</MenuItem>)}
      </MenuBar>
      <ToolRow role="toolbar" aria-label="Standard tools"><Groups groups={topGroups} /></ToolRow>
      <ToolRow role="toolbar" aria-label="Build tools"><Groups groups={buildGroups} /></ToolRow>

      <Main>
        <LeftDock>
          <DockHeader>
            <CloseButton type="button" aria-label="Float panel">
              <svg width="8" height="8"><path d="M2.500 2V.5h5v4H6M.5 3.500h5v4h-5zM.5 4h5" fill="none" stroke="#000" /></svg>
            </CloseButton>
            <CloseButton type="button" aria-label="Close panel"><Cross /></CloseButton>
          </DockHeader>
          <DockBody />
          <DockFooter>
            <button type="button" aria-label="Settings">
              <svg width="18" height="18" viewBox="0 0 18 18">
                <circle cx="8.500" cy="8.500" r="4.500" fill="none" stroke="#444" strokeWidth="3.500" />
                <circle cx="8.500" cy="8.500" r="7" fill="none" stroke="#444" strokeWidth="2" strokeDasharray="3 2.500" />
                <path d="M12 12h6l-3 4z" fill="#000" />
              </svg>
            </button>
          </DockFooter>
        </LeftDock>

        <Center>
          <Tabs role="tablist">
            <Tab $active>
              <button type="button" role="tab" aria-selected="true">Training House HDP: Floor Plan</button>
              <CloseButton type="button" aria-label="Close tab"><Cross /></CloseButton>
            </Tab>
            <Tab>
              <button type="button" role="tab" aria-selected="false">Training House HDP: Cross Section/Elevation - Cross Section 6</button>
              <CloseButton type="button" aria-label="Close tab"><Cross /></CloseButton>
            </Tab>
          </Tabs>
          <DocTitle>
            <span>Training House HDP: Floor Plan</span>
            <CloseButton type="button" aria-label="Close view"><Cross /></CloseButton>
          </DocTitle>
          <View>
            <FloorPlan />
            <ScrollTrack $vertical>
              <button type="button" aria-label="Scroll up"><Chevron d="M1 6l3-4 3 4" /></button>
              <Rail>
                <Space $size={156} /><Thumb $size={73} /><Space $size={582} />
              </Rail>
              <button type="button" aria-label="Scroll down"><Chevron d="M1 2l3 4 3-4" /></button>
            </ScrollTrack>
            <ScrollTrack>
              <button type="button" aria-label="Scroll left"><Chevron d="M6 0l-4 4 4 4" /></button>
              <Rail>
                <Space $size={599} /><Thumb $size={161} /><Space $size={1021} />
              </Rail>
              <button type="button" aria-label="Scroll right"><Chevron d="M2 0l4 4-4 4" /></button>
            </ScrollTrack>
          </View>
        </Center>

        <RightBar role="toolbar" aria-label="View tools"><Groups groups={sideGroups} vertical /></RightBar>
      </Main>

      <StatusBar>
        <Grip />
        <StatusCells>
          <Cell $first />
          <Cell>Select Objects [Space]</Cell>
          <Cell>Floor: 1</Cell>
          <Cell />
          <Cell>X: 306 5/8", Y: 472", Z: 0"</Cell>
          <Cell>1812 x 845</Cell>
          <Cell />
        </StatusCells>
      </StatusBar>

      <Products>
        <h2>Applicable Products:</h2>
        <Badges>
          <Badge $on>P</Badge>
          <Badge>A</Badge>
          <Badge>S</Badge>
          <Badge>I</Badge>
        </Badges>
      </Products>
    </AppWindow>
  );
}
